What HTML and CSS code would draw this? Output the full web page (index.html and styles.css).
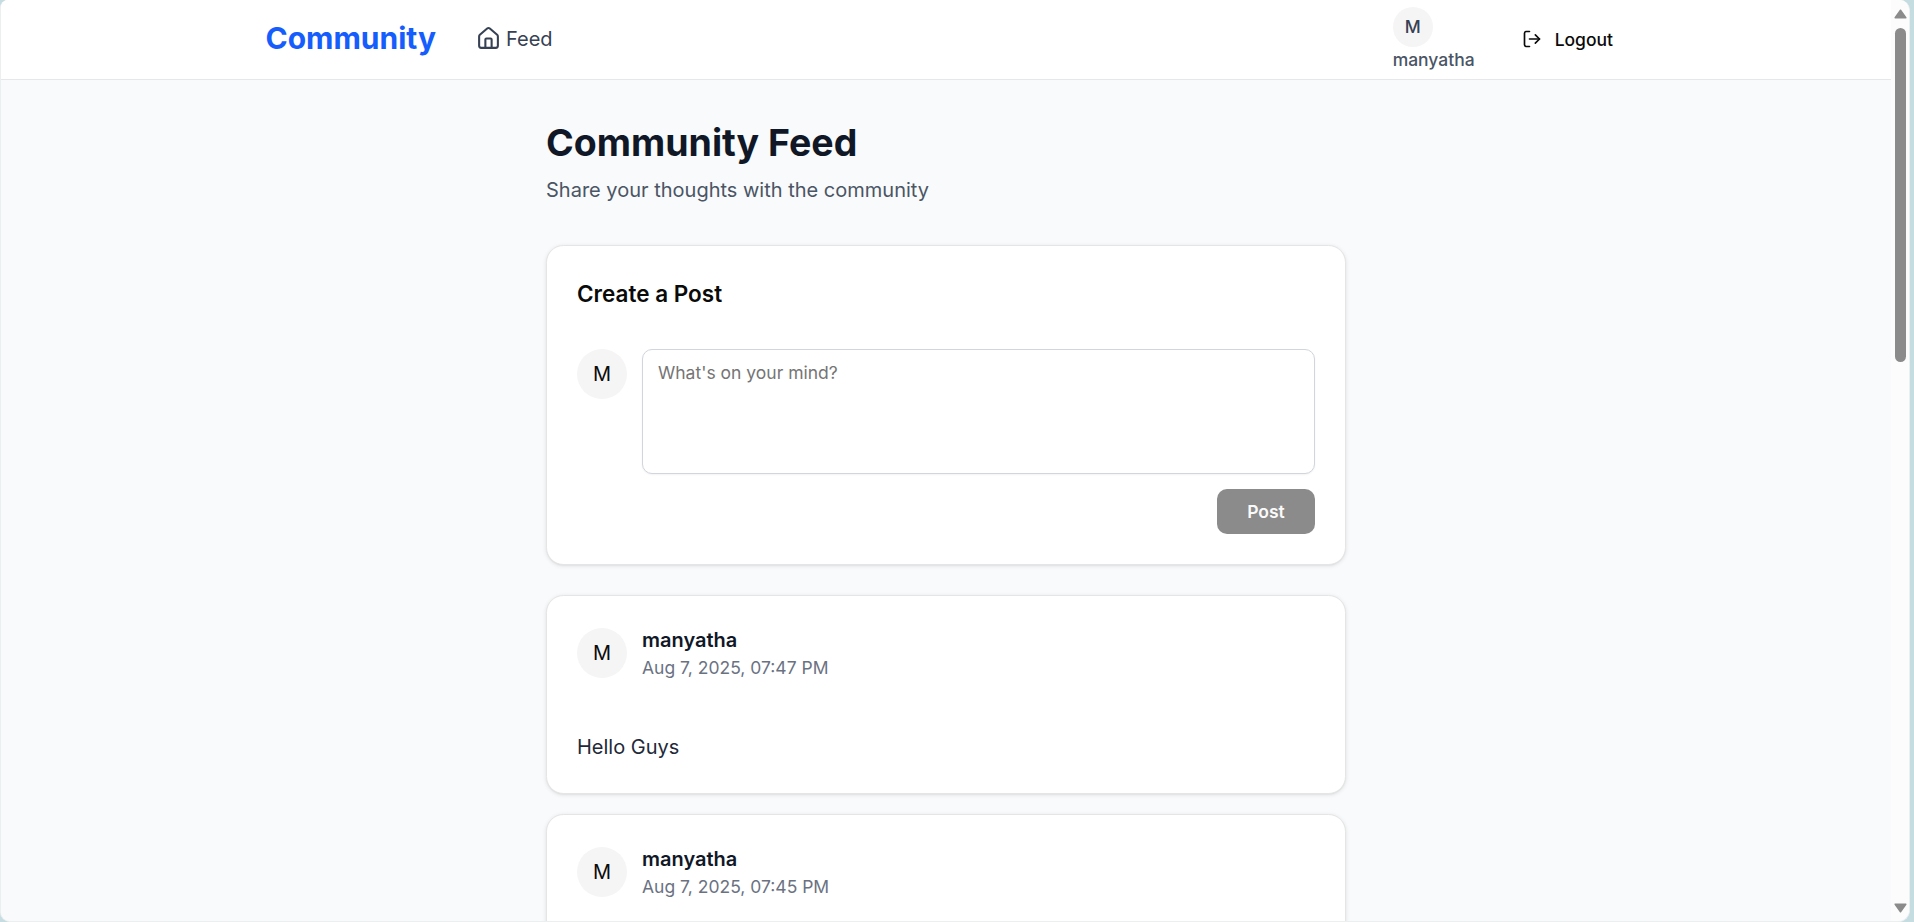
FILE: index.html
```html
<!DOCTYPE html>
<html lang="en">
<head>
<meta charset="utf-8">
<title>Community</title>
<link rel="stylesheet" href="styles.css">
</head>
<body>
<div class="window">
  <div class="page">
    <header class="header">
      <div class="brand">Community</div>
      <a class="nav-link">
        <svg class="icon-home" viewBox="0 0 24 24" fill="none" stroke="currentColor" stroke-width="2" stroke-linecap="round" stroke-linejoin="round"><path d="M15 21v-8a1 1 0 0 0-1-1h-4a1 1 0 0 0-1 1v8"/><path d="M3 10a2 2 0 0 1 .709-1.528l7-5.999a2 2 0 0 1 2.582 0l7 5.999A2 2 0 0 1 21 10v9a2 2 0 0 1-2 2H5a2 2 0 0 1-2-2z"/></svg>
        <span>Feed</span>
      </a>
      <div class="user">
        <div class="avatar avatar-small">M</div>
        <span class="user-name">manyatha</span>
      </div>
      <button class="logout">
        <svg class="icon-logout" viewBox="0 0 24 24" fill="none" stroke="currentColor" stroke-width="2" stroke-linecap="round" stroke-linejoin="round"><path d="m16 17 5-5-5-5"/><path d="M21 12H9"/><path d="M9 21H5a2 2 0 0 1-2-2V5a2 2 0 0 1 2-2h4"/></svg>
        <span>Logout</span>
      </button>
    </header>
    <main class="feed">
      <h1 class="title">Community Feed</h1>
      <p class="subtitle">Share your thoughts with the community</p>
      <section class="card composer">
        <h2 class="composer-title">Create a Post</h2>
        <div class="row">
          <div class="avatar">M</div>
          <div class="composer-form">
            <textarea class="input" placeholder="What's on your mind?"></textarea>
            <button class="post-button">Post</button>
          </div>
        </div>
      </section>
      <article class="card post">
        <div class="row">
          <div class="avatar">M</div>
          <div class="meta">
            <div class="author">manyatha</div>
            <div class="date">Aug 7, 2025, 07:47 PM</div>
          </div>
        </div>
        <p class="body">Hello Guys</p>
      </article>
      <article class="card post">
        <div class="row">
          <div class="avatar">M</div>
          <div class="meta">
            <div class="author">manyatha</div>
            <div class="date">Aug 7, 2025, 07:45 PM</div>
          </div>
        </div>
      </article>
    </main>
  </div>
  <div class="scrollbar">
    <svg class="arrow" viewBox="0 0 13 10"><path d="M6.5 1.2 11.8 8.8H1.2Z" fill="#8b8b8b" stroke="#8b8b8b" stroke-width="1.5" stroke-linejoin="round"/></svg>
    <div class="thumb"></div>
    <svg class="arrow arrow-down" viewBox="0 0 13 10"><path d="M6.5 8.8 1.2 1.2H11.8Z" fill="#8b8b8b" stroke="#8b8b8b" stroke-width="1.5" stroke-linejoin="round"/></svg>
  </div>
</div>
</body>
</html>
```
FILE: styles.css
```css
* { box-sizing: border-box; margin: 0; padding: 0; }

body {
  height: 922px;
  overflow: hidden;
  background: #c5dde1;
  font-family: Inter, "Liberation Sans", sans-serif;
  font-size: 20px;
  line-height: 30px;
  color: #0a0a0a;
}

button { font: inherit; border: 0; background: none; color: inherit; }

.window {
  display: flex;
  width: 1910px;
  height: 922px;
  border: 1px solid #eceff0;
  border-top: 0;
  border-radius: 8px 10px 12px 10px;
  overflow: hidden;
  background: #f9fafb;
}

.page { width: 1890px; height: 921px; overflow: hidden; background: #f9fafb; }

.header {
  display: flex;
  align-items: center;
  height: 80px;
  padding: 0 278px 0 264.5px;
  background: #fff;
  border-bottom: 1px solid #e5e7eb;
}

.brand {
  width: 170px;
  margin-right: 40.5px;
  padding-bottom: 3px;
  font-size: 30px;
  line-height: 40px;
  font-weight: 700;
  color: #155dfc;
}

.nav-link { display: flex; align-items: center; gap: 5px; padding-bottom: 1px; color: #364153; }
.icon-home { width: 25px; height: 25px; margin-top: -1px; }

.user { margin-left: auto; width: 82px; height: 66px; color: #364153; }
.user-name {
  display: block;
  font-size: 17.5px;
  line-height: 25px;
  font-weight: 500;
  color: #4a5565;
}

.avatar {
  display: flex;
  flex: none;
  align-items: center;
  justify-content: center;
  width: 50px;
  height: 50px;
  border-radius: 50%;
  background: #f5f5f5;
}
.avatar-small { width: 40px; height: 40px; font-size: 17.5px; font-weight: 500; }

.logout {
  display: flex;
  align-items: center;
  gap: 13px;
  margin-left: 47px;
  font-size: 17.5px;
  line-height: 25px;
  font-weight: 500;
}
.icon-logout { width: 20px; height: 20px; margin-top: -1px; }

.feed { width: 800px; margin: 0 auto; padding-top: 40px; }

.title { font-size: 37.5px; line-height: 45px; font-weight: 700; color: #101828; }
.subtitle { margin: 10px 0 40px; color: #4a5565; }

.card {
  padding: 32px 30px;
  background: #fff;
  border: 1px solid #e5e5e5;
  border-radius: 17.5px;
  box-shadow: 0 1px 4px rgba(0, 0, 0, .1), 0 1px 2px -1px rgba(0, 0, 0, .1);
}

.row { display: flex; gap: 15px; }

.composer { height: 320px; margin-bottom: 30px; }
.composer-title { font-size: 22.5px; line-height: 32px; font-weight: 600; margin-bottom: 39px; }
.composer-form { display: flex; flex-direction: column; align-items: flex-end; flex: 1; gap: 15px; }
.input {
  display: block;
  width: 100%;
  height: 125px;
  padding: 10px 15px;
  border: 1px solid #d1d5dc;
  border-radius: 10px;
  resize: none;
  outline: none;
  box-shadow: 0 1px 2px rgba(0, 0, 0, .05);
  font: 17.5px/25px Inter, "Liberation Sans", sans-serif;
}
.input::placeholder { color: #757575; }
.post-button {
  width: 98px;
  height: 45px;
  border-radius: 10px;
  background: #8b8b8b;
  color: #fafafa;
  font-size: 17.5px;
  line-height: 25px;
  font-weight: 600;
}

.post { height: 199px; margin-bottom: 20px; }
.author { line-height: 25px; font-weight: 600; color: #101828; }
.date { margin-top: 2px; font-size: 17.5px; line-height: 25px; color: #6a7282; }
.body { margin-top: 52px; color: #1e2939; }

.scrollbar {
  display: flex;
  flex-direction: column;
  align-items: center;
  flex: 1;
  padding: 9px 0 8px;
  background: #fcfcfc;
}
.arrow { display: block; width: 13px; height: 10px; }
.arrow-down { margin-top: auto; }
.thumb { width: 11px; height: 334px; margin-top: 9px; border-radius: 6px; background: #8b8b8b; }
```
